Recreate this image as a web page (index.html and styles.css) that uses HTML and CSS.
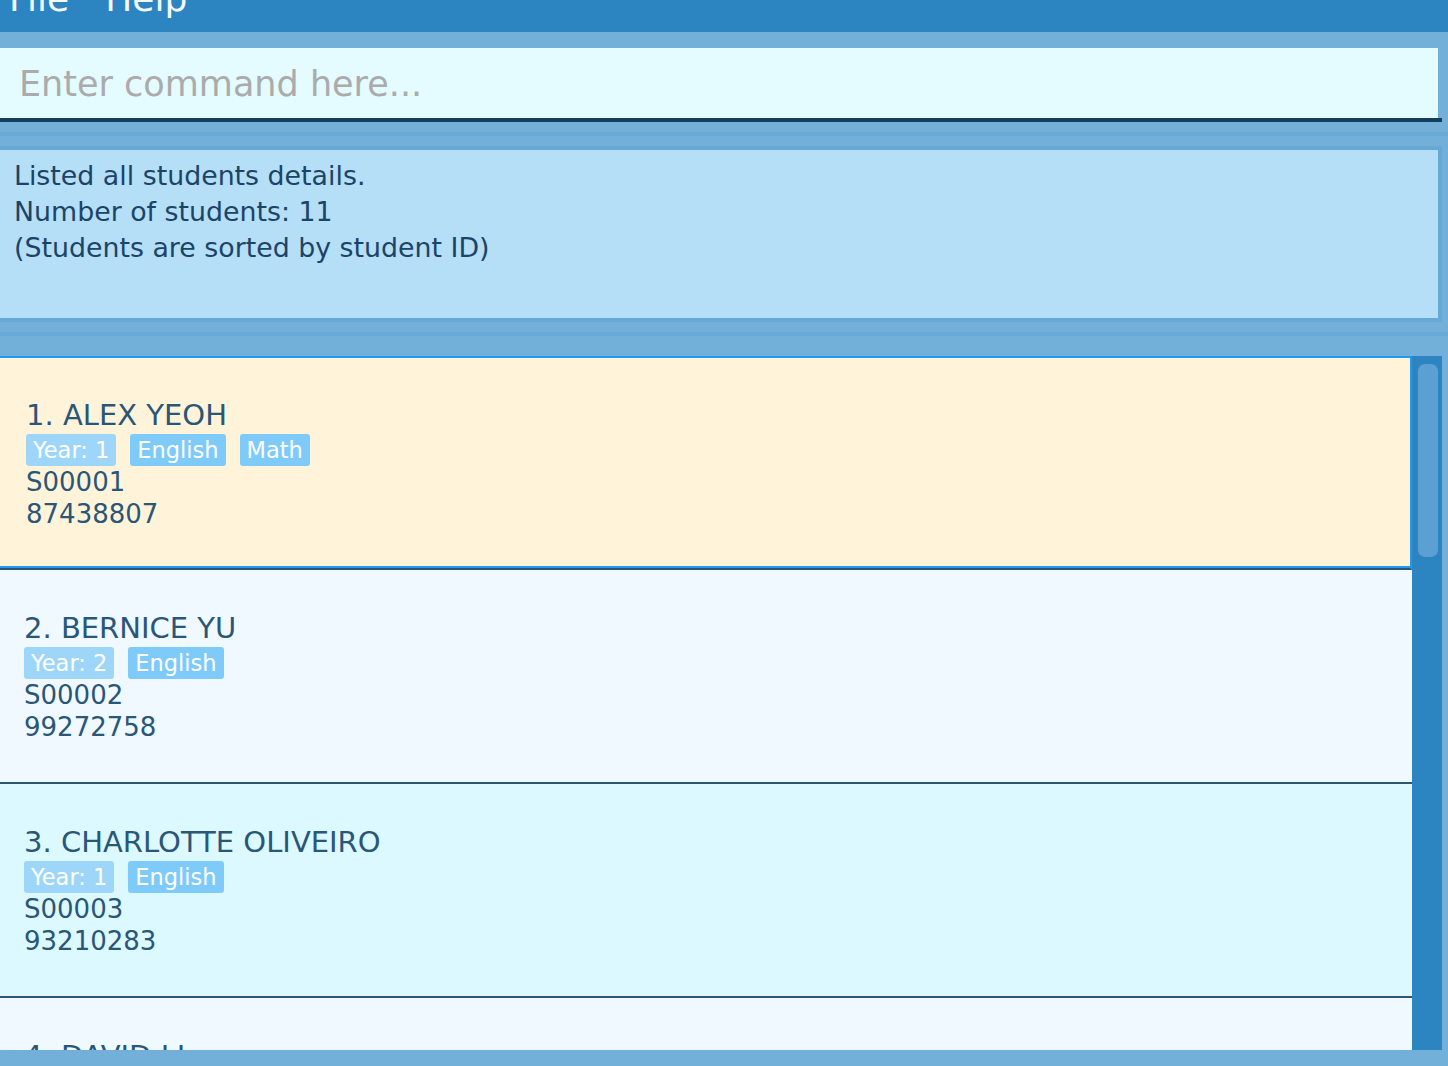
FILE: index.html
```
<!DOCTYPE html>
<html lang="en">
<head>
<meta charset="utf-8">
<title>Student List</title>
<link rel="stylesheet" href="styles.css">
</head>
<body>
<div class="app">
  <div class="menubar">
    <span class="menu-item">File</span>
    <span class="menu-item">Help</span>
  </div>
  <div class="menu-gap"></div>
  <div class="cmd">
    <input class="cmd-input" type="text" placeholder="Enter command here...">
  </div>
  <div class="divider"><div class="divider-line"></div></div>
  <div class="result">
    <div class="result-box">
      <div>Listed all students details.</div>
      <div>Number of students: 11</div>
      <div>(Students are sorted by student ID)</div>
    </div>
  </div>
  <div class="divider divider-lower"><div class="divider-line"></div></div>
  <div class="list-pane">
    <div class="list">
      <div class="card selected">
        <div class="name">1. ALEX YEOH</div>
        <div class="tags"><span class="tag tag-year">Year: 1</span><span class="tag">English</span><span class="tag">Math</span></div>
        <div class="detail">S00001</div>
        <div class="detail">87438807</div>
      </div>
      <div class="card even">
        <div class="name">2. BERNICE YU</div>
        <div class="tags"><span class="tag tag-year">Year: 2</span><span class="tag">English</span></div>
        <div class="detail">S00002</div>
        <div class="detail">99272758</div>
      </div>
      <div class="card odd">
        <div class="name">3. CHARLOTTE OLIVEIRO</div>
        <div class="tags"><span class="tag tag-year">Year: 1</span><span class="tag">English</span></div>
        <div class="detail">S00003</div>
        <div class="detail">93210283</div>
      </div>
      <div class="card even">
        <div class="name">4. DAVID LI</div>
        <div class="tags"><span class="tag tag-year">Year: 3</span><span class="tag">Math</span></div>
        <div class="detail">S00004</div>
        <div class="detail">91031282</div>
      </div>
    </div>
    <div class="scrollbar"><div class="thumb"></div></div>
  </div>
</div>
</body>
</html>
```
FILE: styles.css
```
* { box-sizing: border-box; }
html, body {
  margin: 0;
  padding: 0;
  width: 1448px;
  height: 1066px;
  overflow: hidden;
  background: #72afd9;
  font-family: "DejaVu Sans", Verdana, sans-serif;
}
.app {
  display: flex;
  flex-direction: column;
  width: 1448px;
  height: 1066px;
}
.menubar {
  height: 32px;
  flex: 0 0 32px;
  background: #2c84c0;
  overflow: hidden;
  display: flex;
  align-items: flex-start;
  gap: 36px;
  padding-left: 9px;
}
.menu-item {
  color: #f2f8fc;
  font-size: 36px;
  line-height: 36px;
  margin-top: -19px;
}
.menu-gap { flex: 0 0 16px; }
.cmd {
  width: 1442px;
  flex: 0 0 auto;
  border-bottom: 4px solid #133f5d;
}
.cmd-input {
  display: block;
  width: 1438px;
  height: 70px;
  margin: 0;
  border: none;
  outline: none;
  background: #e4fbff;
  padding: 2px 0 0 19px;
  font-family: "DejaVu Sans", Verdana, sans-serif;
  font-size: 35px;
  color: #333;
}
.cmd-input::placeholder { color: #ababab; }
.divider {
  flex: 0 0 24px;
  padding-top: 10px;
}
.divider-line {
  height: 4px;
  background: #68aad7;
}
.divider-lower { flex: 0 0 34px; }
.result {
  width: 1442px;
  flex: 0 0 176px;
  border: 4px solid #67a9d6;
  border-left: none;
}
.result-box {
  height: 168px;
  background: #b5def7;
  color: #1b4467;
  font-size: 26.8px;
  line-height: 36px;
  padding: 8px 0 0 14px;
}
.list-pane {
  flex: 0 0 694px;
  display: flex;
  width: 1442px;
  overflow: hidden;
}
.list {
  width: 1412px;
  flex: 0 0 1412px;
  overflow: hidden;
}
.card {
  height: 214px;
  border-bottom: 2px solid #2c5674;
  padding: 42px 0 0 24px;
  color: #2a5677;
}
.card.selected {
  background: #fff4da;
  border-top: 2px solid #1e9bf0;
  border-right: 2px solid #1e9bf0;
  box-shadow: inset 0 -2px 0 #1e9bf0;
  padding: 41px 0 0 26px;
}
.card.even { background: #eff9ff; }
.card.odd { background: #dbf9ff; }
.name {
  font-size: 29px;
  line-height: 32px;
  height: 32px;
  margin-bottom: 3px;
}
.tags {
  display: flex;
  gap: 14px;
  height: 32px;
}
.tag {
  background: #7ecbfa;
  color: #ffffff;
  font-size: 22.5px;
  line-height: 26px;
  padding: 3px 7px;
  border-radius: 3px;
}
.tag-year { background: #9ed6f9; }
.detail {
  font-size: 26px;
  line-height: 32px;
}
.scrollbar {
  flex: 0 0 30px;
  background: #2c84c0;
  padding: 8px 4px 0 6px;
}
.thumb {
  height: 193px;
  background: #5aa0d3;
  border-radius: 7px;
}
```
